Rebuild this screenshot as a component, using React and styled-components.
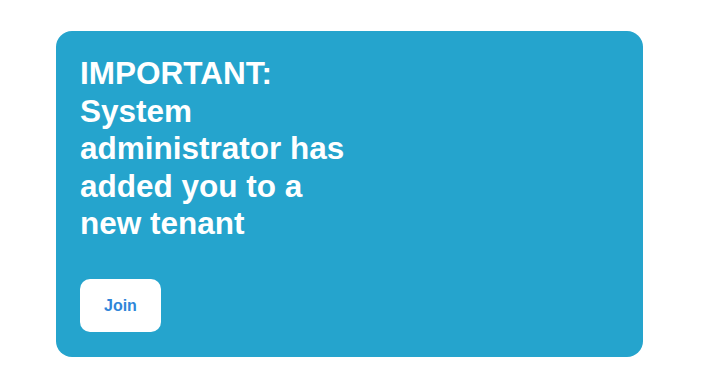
import styled, { createGlobalStyle } from "styled-components";

const GlobalStyle = createGlobalStyle`
  html, body {
    margin: 0;
    padding: 0;
    background: #ffffff;
    font-family: "Liberation Sans", Arial, sans-serif;
  }
`;

const Page = styled.div`
  padding: 31px 0 0 56px;
`;

const Card = styled.section`
  box-sizing: border-box;
  width: 587px;
  height: 326px;
  padding: 24px;
  border-radius: 16px;
  background: #25a4cd;
  display: flex;
  flex-direction: column;
  align-items: flex-start;
`;

const Title = styled.h2`
  margin: 0;
  max-width: 280px;
  color: #ffffff;
  font-size: 31.5px;
  line-height: 37.5px;
  font-weight: 700;
`;

const JoinButton = styled.button`
  margin-top: 36px;
  padding: 16px 24px;
  border: none;
  border-radius: 10px;
  background: #ffffff;
  color: #2f86d9;
  font-family: inherit;
  font-size: 16px;
  line-height: 21px;
  font-weight: 700;
  cursor: pointer;
`;

export default function App() {
  return (
    <>
      <GlobalStyle />
      <Page>
        <Card>
          <Title>
            IMPORTANT:
            <br />
            System administrator has added you to a new tenant
          </Title>
          <JoinButton>Join</JoinButton>
        </Card>
      </Page>
    </>
  );
}
